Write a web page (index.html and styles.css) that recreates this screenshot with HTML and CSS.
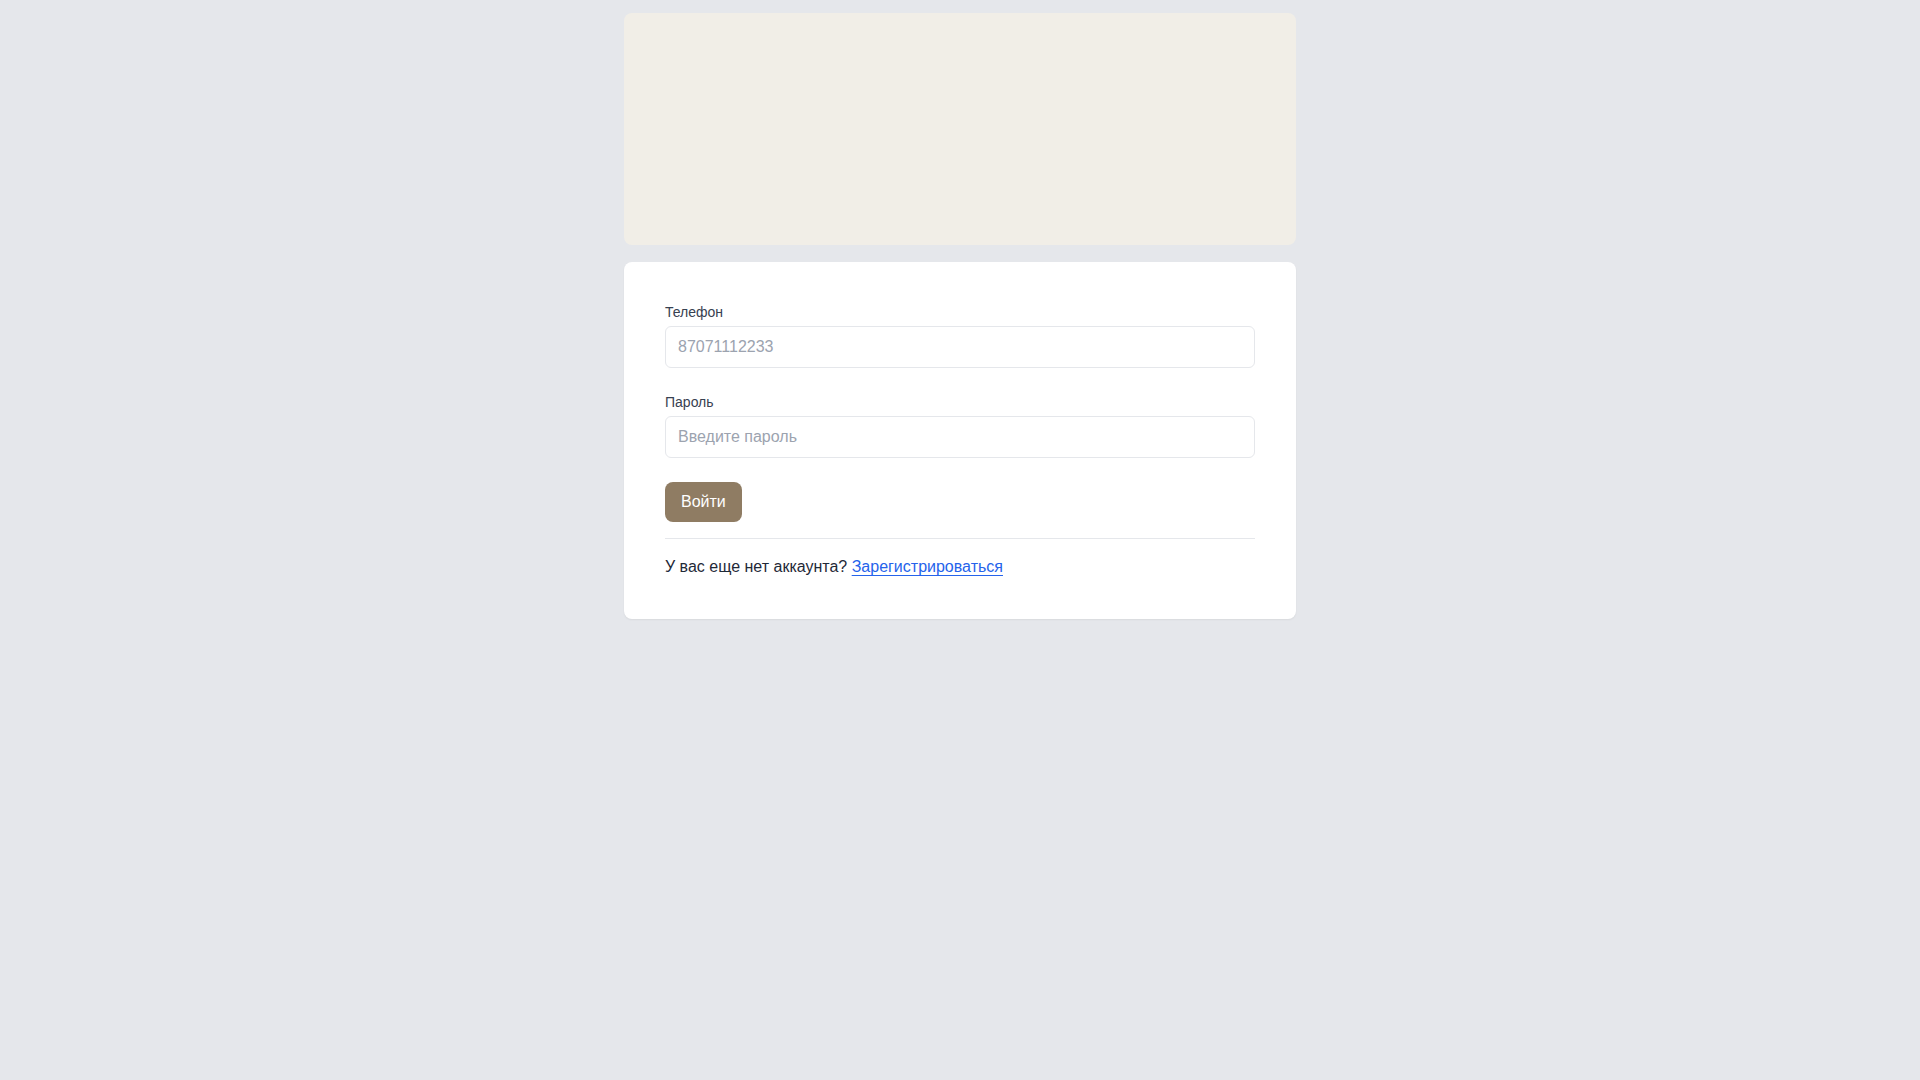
FILE: index.html
```html
<!DOCTYPE html>
<html lang="ru">
<head>
<meta charset="utf-8">
<title>Вход</title>
<link rel="stylesheet" href="styles.css">
</head>
<body>
<div class="page">
  <div class="banner"></div>
  <div class="card">
    <form class="form">
      <div class="group">
        <label class="label" for="phone">Телефон</label>
        <input class="input" id="phone" type="text" placeholder="87071112233">
      </div>
      <div class="group">
        <label class="label" for="pass">Пароль</label>
        <input class="input" id="pass" type="password" placeholder="Введите пароль">
      </div>
      <button class="btn" type="button">Войти</button>
    </form>
    <div class="footer">У вас еще нет аккаунта? <a class="link" href="#">Зарегистрироваться</a></div>
  </div>
</div>
</body>
</html>
```

FILE: styles.css
```css
* { box-sizing: border-box; }
html, body { margin: 0; padding: 0; }
body {
  background: #e5e7eb;
  font-family: "Liberation Sans", Arial, sans-serif;
  color: #1f2937;
  min-height: 100vh;
}
.page {
  width: 672px;
  margin: 13px auto 0;
  display: flex;
  flex-direction: column;
}
.banner {
  height: 232px;
  background: #f1eee7;
  border-radius: 8px;
  margin-bottom: 17px;
}
.card {
  background: #ffffff;
  border-radius: 8px;
  padding: 40px 41px 40px 41px;
  box-shadow: 0 1px 2px rgba(0,0,0,0.06);
}
.form {
  display: flex;
  flex-direction: column;
  padding-bottom: 16px;
  border-bottom: 1px solid #e5e7eb;
}
.group {
  display: flex;
  flex-direction: column;
  margin-bottom: 24px;
}
.label {
  font-size: 14px;
  line-height: 20px;
  color: #374151;
  margin-bottom: 4px;
}
.input {
  height: 42px;
  border: 1px solid #e5e7eb;
  border-radius: 6px;
  padding: 8px 12px;
  font-family: "Liberation Sans", Arial, sans-serif;
  font-size: 16px;
  line-height: 24px;
  color: #111827;
  background: #fff;
  outline: none;
}
.input::placeholder { color: #9ca3af; }
.btn {
  align-self: flex-start;
  height: 40px;
  padding: 8px 16px;
  border: none;
  border-radius: 8px;
  background: #8f7c63;
  color: #ffffff;
  font-family: "Liberation Sans", Arial, sans-serif;
  font-size: 16px;
  line-height: 24px;
  cursor: pointer;
}
.footer {
  margin-top: 16px;
  font-size: 16px;
  line-height: 24px;
  color: #1f2937;
}
.link {
  color: #2563eb;
  text-decoration: underline;
  text-decoration-thickness: 1px;
  text-underline-offset: 3px;
}
```
